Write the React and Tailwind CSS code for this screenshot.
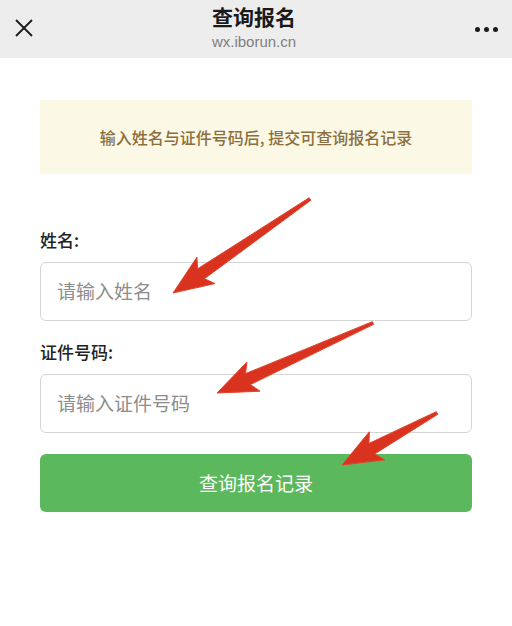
import React from "react";

// red pointer arrows drawn over the form
const arrows = [
  { tail: [310, 199], tip: [173, 293] },
  { tail: [373, 323], tip: [217, 393] },
  { tail: [437, 413], tip: [342, 465] },
];

const arrowPoints = ({ tail, tip }) => {
  const headLen = 40;
  const headHalf = 16;
  const shaftHead = 6;
  const shaftTail = 1.5;
  const dx = tail[0] - tip[0];
  const dy = tail[1] - tip[1];
  const len = Math.hypot(dx, dy);
  const ux = dx / len;
  const uy = dy / len;
  const px = -uy;
  const py = ux;
  const bx = tip[0] + ux * headLen;
  const by = tip[1] + uy * headLen;
  const pts = [
    [tip[0], tip[1]],
    [bx + px * headHalf, by + py * headHalf],
    [bx - ux * 6 + px * shaftHead, by - uy * 6 + py * shaftHead],
    [tail[0] + px * shaftTail, tail[1] + py * shaftTail],
    [tail[0] - px * shaftTail, tail[1] - py * shaftTail],
    [bx - ux * 6 - px * shaftHead, by - uy * 6 - py * shaftHead],
    [bx - px * headHalf, by - py * headHalf],
  ];
  return pts.map((p) => p.join(",")).join(" ");
};

const App = () => {
  return (
    <div
      className="relative w-[512px] h-[626px] bg-white overflow-hidden"
      style={{ fontFamily: '"Noto Sans CJK SC", "Noto Sans", sans-serif' }}
    >
      <div className="h-[58px] bg-[#ededed] flex items-center justify-between px-[15px]">
        <svg width="18" height="18" viewBox="0 0 18 18" className="mt-[-2px]">
          <path d="M1 1 L17 17 M17 1 L1 17" stroke="#1a1a1a" strokeWidth="1.8" fill="none" />
        </svg>
        <div className="flex flex-col items-center">
          <div className="text-[21px] leading-[26px] font-bold text-[#1a1a1a] mt-[-3px]">查询报名</div>
          <div className="text-[15px] leading-[20px] text-[#7f7f7f] mt-[3px]" style={{ fontFamily: '"Liberation Sans", Arial, sans-serif' }}>
            wx.iborun.cn
          </div>
        </div>
        <div className="flex gap-[4px] w-[24px] mr-[-2px]">
          <span className="w-[5px] h-[5px] rounded-full bg-[#1a1a1a]"></span>
          <span className="w-[5px] h-[5px] rounded-full bg-[#1a1a1a]"></span>
          <span className="w-[5px] h-[5px] rounded-full bg-[#1a1a1a]"></span>
        </div>
      </div>

      <div className="px-[40px] pt-[42px]">
        <div className="h-[74px] bg-[#fcf8e6] flex items-center justify-center text-[16px] font-medium text-[#8b6f3e]">
          输入姓名与证件号码后, 提交可查询报名记录
        </div>

        <div className="mt-[54px] text-[17px] leading-[24px] font-medium text-[#222]">姓名:</div>
        <div className="mt-[10px] h-[59px] border border-[#d4d4d4] rounded-[6px] flex items-center px-[16px] text-[19px] text-[#8c8c8c]">
          请输入姓名
        </div>

        <div className="mt-[19px] text-[17px] leading-[24px] font-medium text-[#222]">证件号码:</div>
        <div className="mt-[10px] h-[59px] border border-[#d4d4d4] rounded-[6px] flex items-center px-[16px] text-[19px] text-[#8c8c8c]">
          请输入证件号码
        </div>

        <div className="mt-[21px] h-[58px] bg-[#5cb85c] rounded-[6px] flex items-center justify-center text-[19px] text-white">
          查询报名记录
        </div>
      </div>

      <svg className="absolute inset-0 pointer-events-none" width="512" height="626">
        {arrows.map((a, i) => (
          <polygon key={i} points={arrowPoints(a)} fill="#d9331f" stroke="#e0442c" strokeWidth="1" strokeLinejoin="round" />
        ))}
      </svg>
    </div>
  );
};

export default App;
